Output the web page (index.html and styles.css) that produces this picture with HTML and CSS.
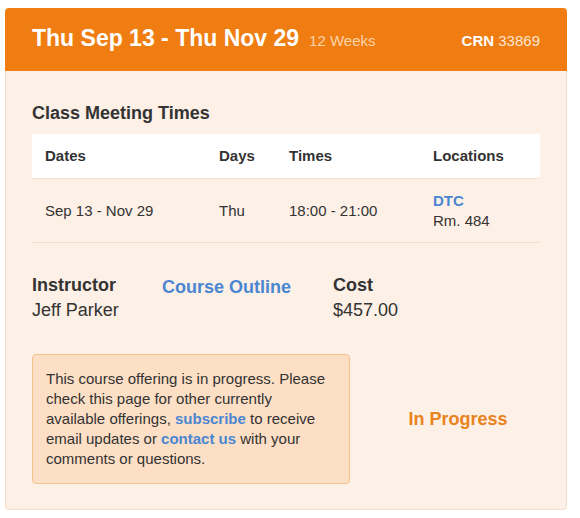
FILE: index.html
```html
<!DOCTYPE html>
<html lang="en">
<head>
<meta charset="utf-8">
<title>Course Offering</title>
<link rel="stylesheet" href="styles.css">
</head>
<body>
<div class="card">
  <div class="card-head">
    <h3 class="title">Thu Sep 13 - Thu Nov 29</h3>
    <span class="weeks">12 Weeks</span>
    <span class="crn"><b>CRN</b> 33869</span>
  </div>
  <div class="card-body">
    <h4 class="section-title">Class Meeting Times</h4>
    <table class="times">
      <colgroup>
        <col class="c-dates"><col class="c-days"><col class="c-times"><col class="c-loc">
      </colgroup>
      <thead>
        <tr><th>Dates</th><th>Days</th><th>Times</th><th>Locations</th></tr>
      </thead>
      <tbody>
        <tr>
          <td>Sep 13 - Nov 29</td>
          <td>Thu</td>
          <td>18:00 - 21:00</td>
          <td><a class="link" href="#">DTC</a><br>Rm. 484</td>
        </tr>
      </tbody>
    </table>
    <div class="info">
      <div class="info-col">
        <div class="label">Instructor</div>
        <div class="value">Jeff Parker</div>
      </div>
      <div class="info-col">
        <a class="link outline" href="#">Course Outline</a>
      </div>
      <div class="info-col">
        <div class="label">Cost</div>
        <div class="value">$457.00</div>
      </div>
    </div>
    <div class="status-row">
      <div class="alert">This course offering is in progress. Please check this page for other currently available offerings, <a class="link" href="#">subscribe</a> to receive email updates or <a class="link" href="#">contact us</a> with your comments or questions.</div>
      <div class="status">In Progress</div>
    </div>
  </div>
</div>
</body>
</html>
```
FILE: styles.css
```css
html, body {
  margin: 0;
  padding: 0;
  background: #ffffff;
}
body {
  font-family: "Liberation Sans", Arial, sans-serif;
  color: #333333;
  font-size: 15px;
}
.card {
  width: 562px;
  margin: 8px 0 0 5px;
}
.card-head {
  display: flex;
  align-items: baseline;
  background: #ef7d11;
  border-radius: 4px 4px 0 0;
  padding: 18px 27px 20px 27px;
  color: #ffffff;
}
.title {
  margin: 0;
  font-size: 23px;
  line-height: 25px;
  font-weight: bold;
}
.weeks {
  margin-left: 10px;
  font-size: 15px;
  color: #fcd3ab;
}
.crn {
  margin-left: auto;
  font-size: 15px;
  color: #fde6d0;
}
.crn b {
  color: #ffffff;
}
.card-body {
  background: #fdf0e6;
  border: 1px solid #f8dfc9;
  border-top: none;
  border-radius: 0 0 4px 4px;
  padding: 32px 26px 25px 26px;
}
.section-title {
  margin: 0 0 11px 0;
  font-size: 18px;
  line-height: 20px;
  font-weight: bold;
  color: #333333;
}
.times {
  width: 508px;
  border-collapse: collapse;
  table-layout: fixed;
}
.c-dates { width: 174px; }
.c-days { width: 70px; }
.c-times { width: 144px; }
.c-loc { width: 120px; }
.times th {
  background: #ffffff;
  text-align: left;
  font-weight: bold;
  padding: 12px 13px;
  line-height: 20px;
  border-bottom: 1px solid #f6dfcb;
}
.times td {
  padding: 12px 13px 11px 13px;
  line-height: 20px;
  vertical-align: middle;
  border-bottom: 1px solid #f6dfcb;
}
.link {
  color: #4a86d2;
  font-weight: bold;
  text-decoration: none;
}
.info {
  display: grid;
  grid-template-columns: 130px 171px 1fr;
  margin-top: 30px;
}
.label {
  font-size: 18px;
  line-height: 25px;
  font-weight: bold;
}
.value {
  font-size: 18px;
  line-height: 25px;
}
.outline {
  display: block;
  font-size: 18px;
  line-height: 25px;
  margin-top: 2px;
}
.status-row {
  display: flex;
  align-items: center;
  margin-top: 31px;
}
.alert {
  width: 282px;
  padding: 14px 21px 14px 13px;
  background: #fcdfc5;
  border: 1px solid #f5c28f;
  border-radius: 4px;
  line-height: 20px;
  color: #333333;
}
.status {
  flex: 1;
  text-align: center;
  padding-left: 26px;
  font-size: 18px;
  font-weight: bold;
  color: #e98320;
}
```
